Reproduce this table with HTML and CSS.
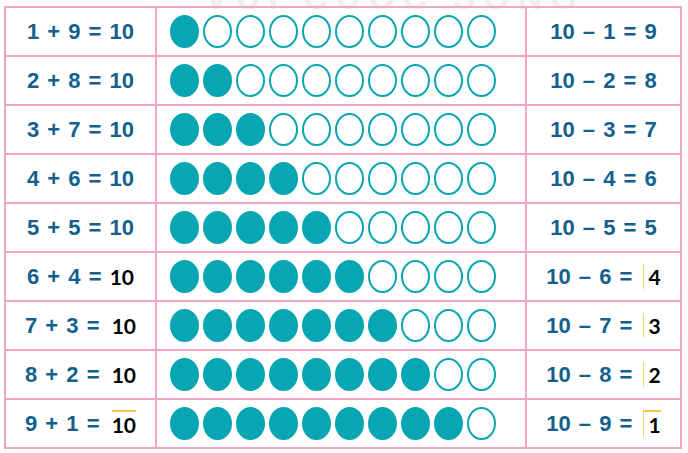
FILE: index.html
```html
<!DOCTYPE html>
<html>
<head>
<meta charset="utf-8">
<link rel="stylesheet" href="styles.css">
</head>
<body>
<div class="page">
  <div class="watermark">VUI CUOC SONG</div>
  <div class="table">
    <div class="cell eq">1 + 9 = 10</div>
    <div class="cell dots"><i class="f"></i><i></i><i></i><i></i><i></i><i></i><i></i><i></i><i></i><i></i></div>
    <div class="cell eq">10 – 1 = 9</div>

    <div class="cell eq">2 + 8 = 10</div>
    <div class="cell dots"><i class="f"></i><i class="f"></i><i></i><i></i><i></i><i></i><i></i><i></i><i></i><i></i></div>
    <div class="cell eq">10 – 2 = 8</div>

    <div class="cell eq">3 + 7 = 10</div>
    <div class="cell dots"><i class="f"></i><i class="f"></i><i class="f"></i><i></i><i></i><i></i><i></i><i></i><i></i><i></i></div>
    <div class="cell eq">10 – 3 = 7</div>

    <div class="cell eq">4 + 6 = 10</div>
    <div class="cell dots"><i class="f"></i><i class="f"></i><i class="f"></i><i class="f"></i><i></i><i></i><i></i><i></i><i></i><i></i></div>
    <div class="cell eq">10 – 4 = 6</div>

    <div class="cell eq">5 + 5 = 10</div>
    <div class="cell dots"><i class="f"></i><i class="f"></i><i class="f"></i><i class="f"></i><i class="f"></i><i></i><i></i><i></i><i></i><i></i></div>
    <div class="cell eq">10 – 5 = 5</div>

    <div class="cell eq">6 + 4 = <span class="ans">10</span></div>
    <div class="cell dots"><i class="f"></i><i class="f"></i><i class="f"></i><i class="f"></i><i class="f"></i><i class="f"></i><i></i><i></i><i></i><i></i></div>
    <div class="cell eq">10 – 6 = <span class="ans r">4</span></div>

    <div class="cell eq">7 + 3 = <span class="ans l">10</span></div>
    <div class="cell dots"><i class="f"></i><i class="f"></i><i class="f"></i><i class="f"></i><i class="f"></i><i class="f"></i><i class="f"></i><i></i><i></i><i></i></div>
    <div class="cell eq">10 – 7 = <span class="ans r">3</span></div>

    <div class="cell eq">8 + 2 = <span class="ans l">10</span></div>
    <div class="cell dots"><i class="f"></i><i class="f"></i><i class="f"></i><i class="f"></i><i class="f"></i><i class="f"></i><i class="f"></i><i class="f"></i><i></i><i></i></div>
    <div class="cell eq">10 – 8 = <span class="ans r">2</span></div>

    <div class="cell eq">9 + 1 = <span class="ans l top">10</span></div>
    <div class="cell dots"><i class="f"></i><i class="f"></i><i class="f"></i><i class="f"></i><i class="f"></i><i class="f"></i><i class="f"></i><i class="f"></i><i class="f"></i><i></i></div>
    <div class="cell eq">10 – 9 = <span class="ans r top">1</span></div>
  </div>
</div>
</body>
</html>
```

FILE: styles.css
```css
html, body {
  margin: 0;
  padding: 0;
  background: #ffffff;
}
.page {
  position: relative;
  width: 688px;
  height: 453px;
  padding: 6px 0 0 4px;
  box-sizing: border-box;
  overflow: hidden;
}
.watermark {
  position: absolute;
  left: 205px;
  top: -22px;
  font-family: "Liberation Sans", Arial, sans-serif;
  font-weight: bold;
  font-size: 34px;
  letter-spacing: 8px;
  color: #efefef;
  z-index: 0;
}
.table {
  position: relative;
  z-index: 1;
  display: grid;
  grid-template-columns: 151px 370px 155px;
  grid-template-rows: repeat(9, 49px);
  width: 676px;
  border-right: 2px solid #f2a6c6;
  border-bottom: 2px solid #f2a6c6;
}
.cell {
  border-left: 2px solid #f2a6c6;
  border-top: 2px solid #f2a6c6;
  display: flex;
  align-items: center;
}
.eq {
  justify-content: center;
  font-family: "Liberation Sans", Arial, sans-serif;
  font-weight: bold;
  font-size: 22px;
  word-spacing: 2px;
  color: #135f8e;
  white-space: pre;
}
.dots {
  padding-left: 13px;
  gap: 4px;
}
.dots i {
  display: block;
  width: 29px;
  height: 33px;
  box-sizing: border-box;
  border: 2.5px solid #08a6b2;
  border-radius: 50%;
  background: #ffffff;
}
.dots i.f {
  background: #08a6b2;
}
.ans {
  font-family: Lato, "Open Sans", sans-serif;
  font-weight: bold;
  color: #000000;
  font-size: 21px;
  word-spacing: 0;
}
.ans.l {
  margin-left: 4px;
}
.ans.r {
  border-left: 1px solid #f7d27a;
  padding-left: 5px;
  margin-left: 2px;
}
.ans.top {
  border-top: 2px solid #f7c64a;
}
```
